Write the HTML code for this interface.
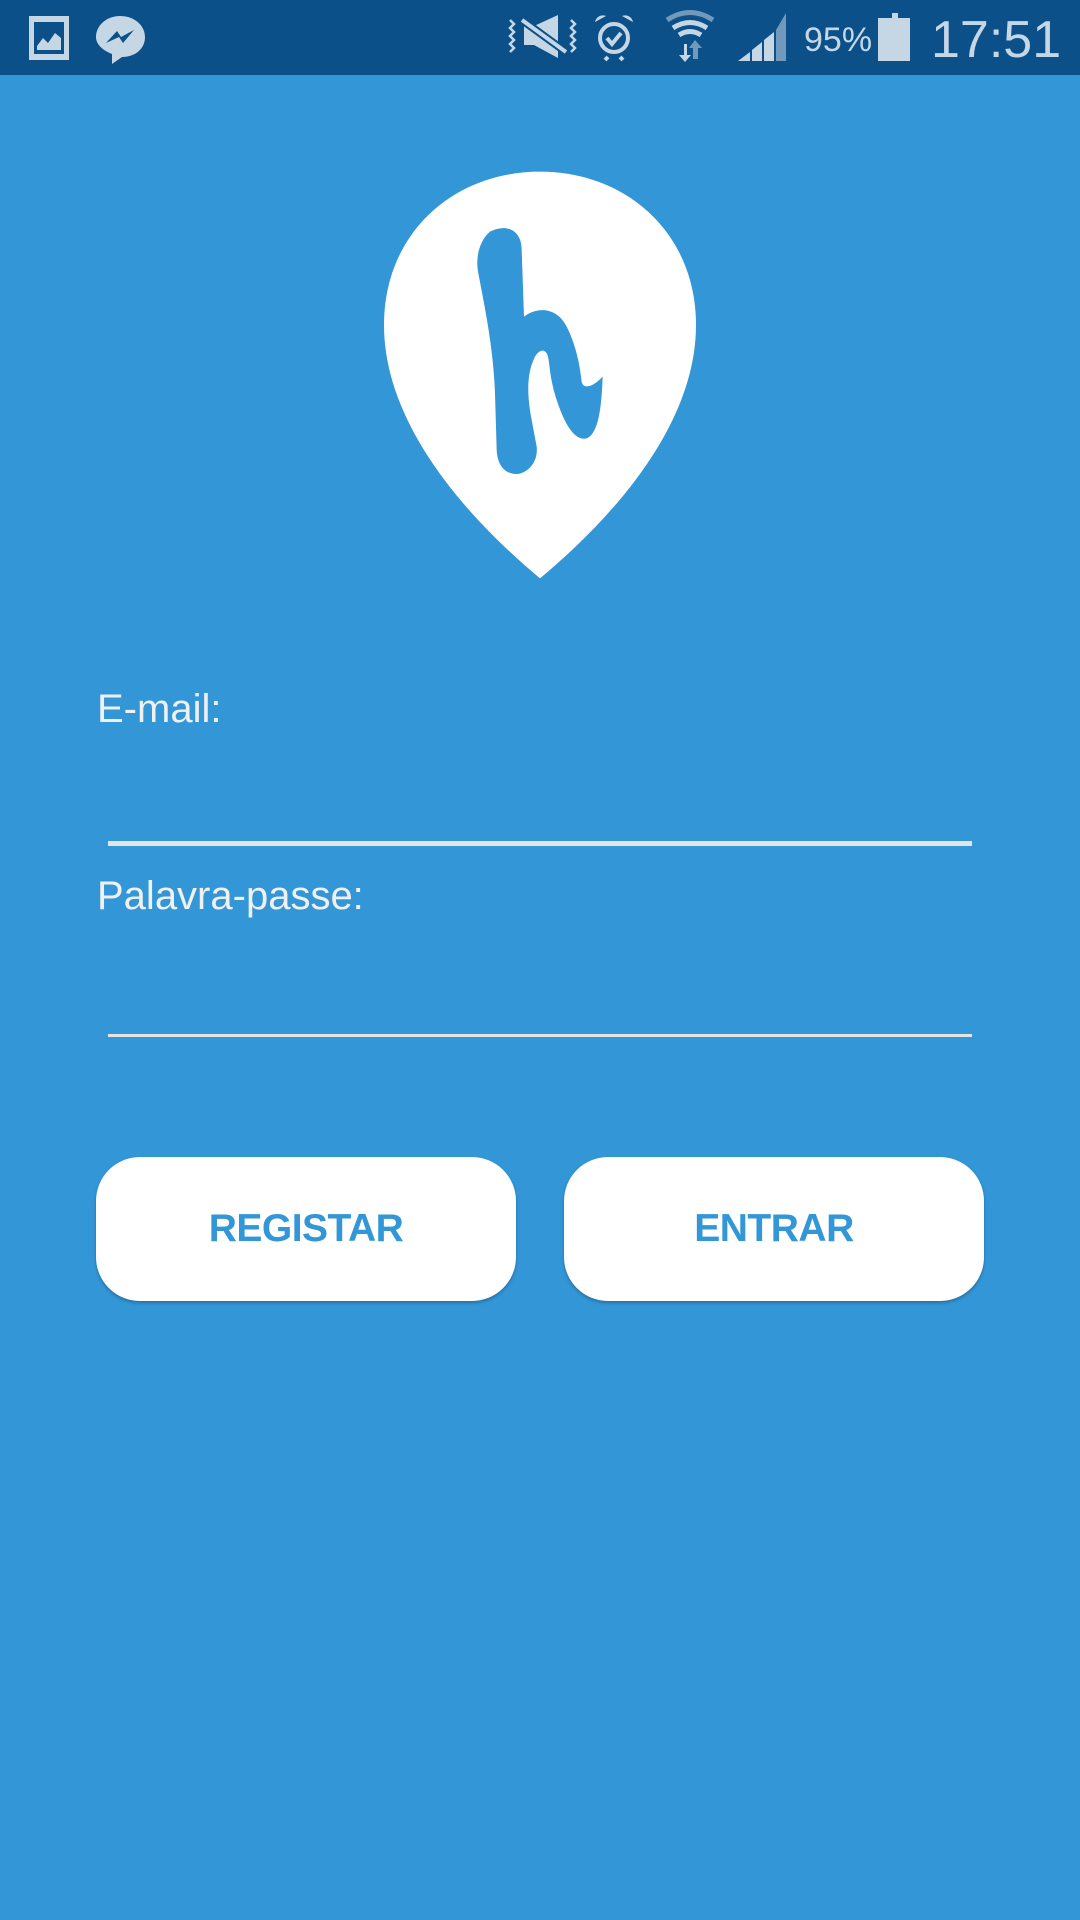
<!DOCTYPE html>
<html><head><meta charset="utf-8"><style>
html,body{margin:0;padding:0;width:1080px;height:1920px;overflow:hidden;background:#3396d7;font-family:"Liberation Sans",sans-serif;}
.sb{position:absolute;left:0;top:0;width:1080px;height:75px;background:#0b5089;}
.lbl{position:absolute;left:97px;color:#f0f0f0;font-size:40px;}
.line{position:absolute;left:108px;width:864px;background:#e4e4e4;}
.btn{position:absolute;top:1157px;height:144px;width:420px;background:#fff;border-radius:44px;box-shadow:0 2px 3px rgba(0,0,0,.25);color:#3396d7;font-weight:bold;font-size:39px;text-align:center;line-height:144px;letter-spacing:-0.5px;}
</style></head><body>
<div class="sb">
<svg width="1080" height="75" style="position:absolute;left:0;top:0">
 <g fill="#c5d6e5" stroke="none">
  <rect x="29" y="16" width="40" height="44"/>
  <rect x="34" y="22" width="30" height="32" fill="#0b5089"/>
  <path d="M37 46 L43 38 L48 43 L55 33 L61 38 L61 50 L37 50Z"/>
  <path d="M120 16 C135 16 145 26 145 37 C145 49 135 57 122 57 L112 64 L112 54 C102 50 96 44 96 37 C96 26 106 16 120 16Z"/>
  <path d="M106 43 L117 31 L121 37 L134 30 L123 43 L119 37Z" fill="#0b5089"/>
  <path d="M524 26 L534 26 L558 15 L558 58 L534 45 L524 45Z"/>
  <text x="804" y="51" font-size="34" font-family="Liberation Sans" fill="#c5d6e5">95%</text>
  <rect x="892" y="13" width="6" height="5"/>
  <rect x="878" y="18" width="32" height="43"/>
  <text x="931" y="57" font-size="52" font-family="Liberation Sans" fill="#c5d6e5">17:51</text>
  <path d="M738 61 L750 52 L750 61Z"/>
  <path d="M752 50 L762 42 L762 61 L752 61Z"/>
  <path d="M764 40 L774 32 L774 61 L764 61Z"/>
  <path d="M776 30 L786 13 L786 61 L776 61Z" opacity=".55"/>
  <path d="M684 44 L687 44 L687 55 L691 55 L685 62 L679 55 L684 55Z"/>
  <path d="M695 40 L702 48 L698 48 L698 59 L693 59 L693 48 L689 48Z" opacity=".55"/>
 </g>
 <g fill="none" stroke="#c5d6e5" stroke-width="4">
  <line x1="522" y1="20" x2="566" y2="52" stroke="#0b5089" stroke-width="8"/>
  <line x1="522" y1="20" x2="566" y2="52"/>
  <path d="M510 20 L514 24 L510 28 L514 32 L510 36 L514 40 L510 44 L514 48 L510 52" stroke-width="2.5"/>
  <path d="M571 20 L575 24 L571 28 L575 32 L571 36 L575 40 L571 44 L575 48 L571 52" stroke-width="2.5"/>
  <circle cx="614" cy="38" r="14"/>
  <path d="M607 38 L612 44 L621 33"/>
  <path d="M608 57 L605 60 M620 57 L623 60"/>
  <path d="M667 20 Q690 5 713 20" opacity=".55" stroke-width="5"/>
  <path d="M673 28 Q690 17 707 28" stroke-width="5"/>
  <path d="M679 35 Q690 28 701 35" stroke-width="5"/>
 </g>
 <g fill="#c5d6e5"><path d="M595 22 A8 8 0 0 1 606 16 Z M633 22 A8 8 0 0 0 622 16 Z"/></g>
</svg>
</div>
<svg width="340" height="420" viewBox="0 0 1020 1260" style="position:absolute;left:370px;top:160px">
 <path fill="#fff" d="M510 35 C250 35 42 220 42 495 C42 800 300 1080 510 1255 C720 1080 978 800 978 495 C978 220 770 35 510 35Z"/>
 <path fill="#3396d7" d="M360 215 C410 190 455 210 455 270 L462 470 C500 440 560 440 590 500 C620 560 630 620 635 665 C640 690 670 680 698 650 C695 720 690 820 650 835 C610 845 580 780 560 720 C540 660 540 620 535 595 C530 565 510 565 495 590 C470 640 470 700 485 780 L500 860 C505 910 470 940 440 942 C400 942 382 910 380 870 L375 700 C370 570 350 470 325 340 C315 290 330 240 360 215Z"/>
</svg>
<div class="lbl" style="top:687px">E-mail:</div>
<div class="line" style="top:841px;height:5px"></div>
<div class="lbl" style="top:874px">Palavra-passe:</div>
<div class="line" style="top:1034px;height:3px"></div>
<div class="btn" style="left:96px">REGISTAR</div>
<div class="btn" style="left:564px">ENTRAR</div>
</body></html>
